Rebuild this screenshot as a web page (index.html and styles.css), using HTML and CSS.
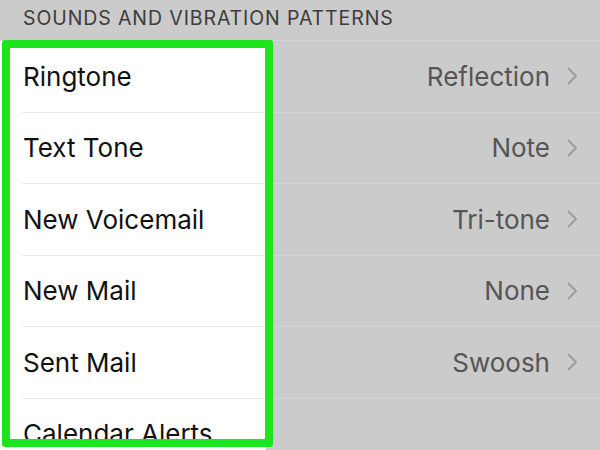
FILE: index.html
```html
<!DOCTYPE html>
<html lang="en">
<head>
    <meta charset="UTF-8">
    <meta name="viewport" content="width=device-width, initial-scale=1.0">
    <title>Sounds</title>
    <link rel="stylesheet" href="styles.css">
</head>
<body>
    <div class="section-header">SOUNDS AND VIBRATION PATTERNS</div>
    <div class="list">
        <div class="row">
            <div class="row-label"><span>Ringtone</span></div>
            <div class="row-value">Reflection <svg class="chevron" width="11" height="18" viewBox="0 0 11 18"><polyline points="1.5,1.5 9,9 1.5,16.5"/></svg></div>
        </div>
        <div class="row">
            <div class="row-label"><span>Text Tone</span></div>
            <div class="row-value">Note <svg class="chevron" width="11" height="18" viewBox="0 0 11 18"><polyline points="1.5,1.5 9,9 1.5,16.5"/></svg></div>
        </div>
        <div class="row">
            <div class="row-label"><span>New Voicemail</span></div>
            <div class="row-value">Tri-tone <svg class="chevron" width="11" height="18" viewBox="0 0 11 18"><polyline points="1.5,1.5 9,9 1.5,16.5"/></svg></div>
        </div>
        <div class="row">
            <div class="row-label"><span>New Mail</span></div>
            <div class="row-value">None <svg class="chevron" width="11" height="18" viewBox="0 0 11 18"><polyline points="1.5,1.5 9,9 1.5,16.5"/></svg></div>
        </div>
        <div class="row">
            <div class="row-label"><span>Sent Mail</span></div>
            <div class="row-value">Swoosh <svg class="chevron" width="11" height="18" viewBox="0 0 11 18"><polyline points="1.5,1.5 9,9 1.5,16.5"/></svg></div>
        </div>
        <div class="row">
            <div class="row-label"><span>Calendar Alerts</span></div>
            <div class="row-value"></div>
        </div>
        <div class="highlight"></div>
    </div>
</body>
</html>
```

FILE: styles.css
```css
body {
    font-family: Inter, "Noto Sans", sans-serif;
    margin: 0;
    padding: 0;
    width: 600px;
    height: 450px;
    background-color: #cbcbcb;
    overflow: hidden;
}
.section-header {
    height: 41px;
    box-sizing: border-box;
    padding-left: 23px;
    padding-top: 6px;
    font-size: 19.5px;
    color: #3c3c3c;
    letter-spacing: 0.9px;
    border-bottom: 1px solid #d2d2d2;
}
.list {
    position: relative;
}
.row {
    display: flex;
    height: 71.5px;
}
.row-label {
    width: 266px;
    background-color: #fff;
    display: flex;
}
.row-label span {
    flex: 1;
    margin-left: 23px;
    display: flex;
    align-items: center;
    font-size: 26px;
    color: #111;
    border-bottom: 1px solid #e8e8e8;
}
.row-value {
    flex: 1;
    display: flex;
    align-items: center;
    justify-content: flex-end;
    padding-right: 22px;
    font-size: 26px;
    color: #555;
    border-bottom: 1px solid #d3d3d3;
}
.chevron {
    margin-left: 17px;
    fill: none;
    stroke: #9e9e9e;
    stroke-width: 2;
    stroke-linecap: round;
    stroke-linejoin: round;
}
.highlight {
    position: absolute;
    top: -1px;
    left: 2px;
    width: 271px;
    height: 407px;
    box-sizing: border-box;
    border: 8px solid #1ee41e;
    border-radius: 3px;
    pointer-events: none;
}
```
